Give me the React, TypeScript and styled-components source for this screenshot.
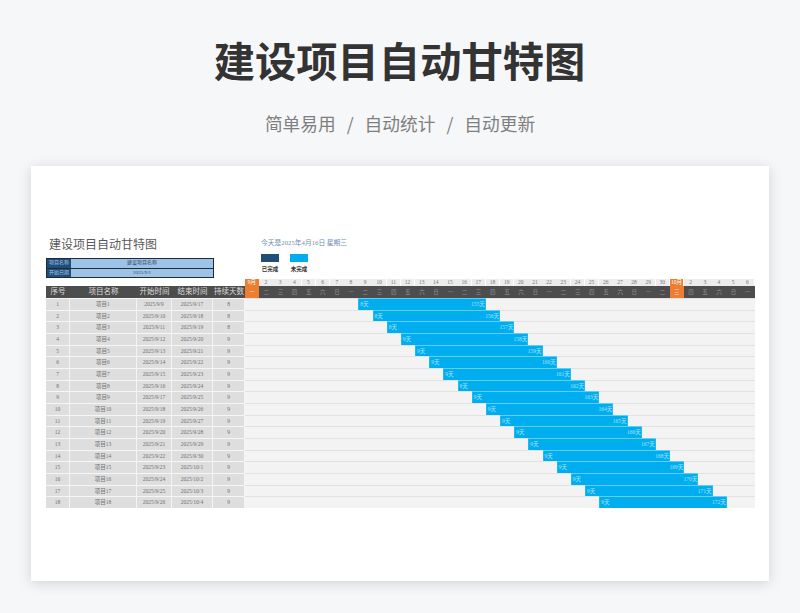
import React from 'react';
import styled, { createGlobalStyle } from 'styled-components';

const Global = createGlobalStyle`
  html, body { margin: 0; padding: 0; background: #f6f7f9; }
  body { width: 800px; height: 613px; overflow: hidden; }
`;

const SERIF = `"Liberation Serif", "Noto Sans CJK SC", serif`;
const SANS = `"Noto Sans CJK SC", "Liberation Sans", sans-serif`;
const DAY = 14.167;
const COLS = `24px 67px 35px 41px 32px`;

const Page = styled.div`
  width: 800px;
  height: 613px;
  display: flex;
  flex-direction: column;
  align-items: center;
`;
const Headline = styled.h1`
  margin: 28px 0 0 -1px;
  height: 62px;
  font: 700 41.3px/62px ${SANS};
  color: #333333;
`;
const Tagline = styled.div`
  margin-top: 19px;
  height: 28px;
  display: flex;
  align-items: center;
  gap: 10px;
  font: 400 17.7px/28px ${SANS};
  color: #7f7f7f;
`;
const Slash = styled.span`
  padding: 0 1px;
`;
const Sheet = styled.div`
  margin-top: 29px;
  width: 738px;
  height: 415px;
  box-sizing: border-box;
  padding: 71px 0 0 15px;
  background: #fff;
  box-shadow: 0 2px 12px rgba(60, 65, 75, 0.2);
  font-family: ${SERIF};
`;
const TopArea = styled.div`
  height: 42px;
  display: flex;
`;
const LeftTop = styled.div`
  width: 199px;
  display: flex;
  flex-direction: column;
`;
const SheetTitle = styled.div`
  height: 21px;
  padding-left: 3px;
  font-size: 12px;
  line-height: 16px;
  color: #595959;
`;
const InfoBox = styled.div`
  width: 168px;
  height: 20px;
  box-sizing: border-box;
  border: 1px solid #1c2c3a;
  display: flex;
  flex-direction: column;
`;
const InfoRow = styled.div`
  flex: 1;
  display: grid;
  grid-template-columns: 24px 1fr;
  & + & { border-top: 1px solid #1c2c3a; }
`;
const InfoLabel = styled.div`
  background: #1f4e79;
  color: #a9c7e4;
  font-size: 5px;
  line-height: 8px;
  text-align: center;
  white-space: nowrap;
`;
const InfoValue = styled.div`
  background: #9dc3e6;
  color: #33465a;
  font-size: 5px;
  line-height: 8px;
  text-align: center;
`;
const RightTop = styled.div`
  padding-left: 16px;
  display: flex;
  flex-direction: column;
`;
const Today = styled.div`
  height: 17px;
  font-size: 6.75px;
  line-height: 11px;
  color: #6f8fb2;
  white-space: nowrap;
`;
const Legend = styled.div`
  display: flex;
  gap: 11px;
`;
const LegendItem = styled.div`
  width: 18px;
  display: flex;
  flex-direction: column;
  align-items: center;
  gap: 3px;
`;
const Swatch = styled.div<{ $c: string }>`
  width: 18px;
  height: 8px;
  background: ${p => p.$c};
`;
const LegendText = styled.div`
  font: 700 5.5px/8px ${SANS};
  color: #333;
  white-space: nowrap;
`;
const Table = styled.div`
  width: 709px;
`;
const HeadGrid = styled.div`
  display: grid;
  grid-template-columns: 199px repeat(36, ${DAY}px);
`;
const DateCell = styled.div<{ $accent?: boolean }>`
  height: 7px;
  margin-right: 0.5px;
  background: ${p => (p.$accent ? '#ed7d31' : '#ececec')};
  color: ${p => (p.$accent ? '#fff' : '#777')};
  font-size: 5.5px;
  line-height: 7px;
  text-align: center;
  white-space: nowrap;
`;
const HeadRow = styled.div`
  display: grid;
  grid-template-columns: ${COLS} repeat(36, ${DAY}px);
  height: 12px;
  background: #4d4d4d;
`;
const HeadCell = styled.div`
  color: #dcdcdc;
  font-size: 7.5px;
  line-height: 12px;
  text-align: center;
  white-space: nowrap;
`;
const WeekCell = styled.div<{ $accent?: boolean }>`
  background: ${p => (p.$accent ? '#ed7d31' : 'transparent')};
  color: ${p => (p.$accent ? '#f7d9c4' : '#8f8f8f')};
  font-size: 5.5px;
  line-height: 12px;
  text-align: center;
`;
const Row = styled.div`
  display: grid;
  grid-template-columns: ${COLS} 510px;
  height: 11.667px;
`;
const Cell = styled.div`
  background: #dedede;
  border-top: 1px solid #f6f6f6;
  border-right: 0.7px solid #f4f4f4;
  color: #707070;
  font-size: 5.5px;
  line-height: 10px;
  text-align: center;
  white-space: nowrap;
`;
const Track = styled.div`
  background: #f3f3f3;
  border-top: 1px solid #e2e2e2;
  display: grid;
  grid-template-columns: repeat(36, 1fr);
`;
const Bar = styled.div`
  background: #00aeef;
  box-shadow: 0 -1px 0 #62cdf5, inset 0.5px 0 0 #45c2f2, inset -0.5px 0 0 #45c2f2;
  display: flex;
  justify-content: space-between;
  padding: 0 1px 0 2px;
  color: #a8e2f9;
  font-size: 5.5px;
  line-height: 10px;
  white-space: nowrap;
  overflow: hidden;
`;

const dayNums = ['9月', ...Array.from({ length: 29 }, (_, i) => String(i + 2)), '10月', '2', '3', '4', '5', '6'];
const wk = ['一', '二', '三', '四', '五', '六', '日'];

const rows = Array.from({ length: 18 }, (_, i) => {
  const fmt = (d: number) => (d > 30 ? `2025/10/${d - 30}` : `2025/9/${d}`);
  return {
    n: i + 1,
    name: `项目${i + 1}`,
    start: fmt(9 + i),
    end: fmt(17 + i),
    dur: i < 3 ? 8 : 9,
    left: 155 + i,
  };
});

export default function App() {
  return (
    <Page>
      <Global />
      <Headline>建设项目自动甘特图</Headline>
      <Tagline>
        <span>简单易用</span>
        <Slash>/</Slash>
        <span>自动统计</span>
        <Slash>/</Slash>
        <span>自动更新</span>
      </Tagline>
      <Sheet>
        <TopArea>
          <LeftTop>
            <SheetTitle>建设项目自动甘特图</SheetTitle>
            <InfoBox>
              <InfoRow>
                <InfoLabel>项目名称</InfoLabel>
                <InfoValue>建设项目名称</InfoValue>
              </InfoRow>
              <InfoRow>
                <InfoLabel>开始日期</InfoLabel>
                <InfoValue>2025/9/1</InfoValue>
              </InfoRow>
            </InfoBox>
          </LeftTop>
          <RightTop>
            <Today>今天是2025年4月16日 星期三</Today>
            <Legend>
              <LegendItem>
                <Swatch $c="#1f4e79" />
                <LegendText>已完成</LegendText>
              </LegendItem>
              <LegendItem>
                <Swatch $c="#00aeef" />
                <LegendText>未完成</LegendText>
              </LegendItem>
            </Legend>
          </RightTop>
        </TopArea>
        <Table>
          <HeadGrid>
            <div />
            {dayNums.map((d, i) => (
              <DateCell key={i} $accent={i === 0 || i === 30}>{d}</DateCell>
            ))}
          </HeadGrid>
          <HeadRow>
            {['序号', '项目名称', '开始时间', '结束时间', '持续天数'].map(h => (
              <HeadCell key={h}>{h}</HeadCell>
            ))}
            {dayNums.map((_, i) => (
              <WeekCell key={i} $accent={i === 0 || i === 30}>{wk[i % 7]}</WeekCell>
            ))}
          </HeadRow>
          {rows.map((r, i) => (
            <Row key={r.n}>
              <Cell>{r.n}</Cell>
              <Cell>{r.name}</Cell>
              <Cell>{r.start}</Cell>
              <Cell>{r.end}</Cell>
              <Cell>{r.dur}</Cell>
              <Track>
                <Bar style={{ gridColumn: `${9 + i} / span 9` }}>
                  <span>{r.dur}天</span>
                  <span>{r.left}天</span>
                </Bar>
              </Track>
            </Row>
          ))}
        </Table>
      </Sheet>
    </Page>
  );
}
